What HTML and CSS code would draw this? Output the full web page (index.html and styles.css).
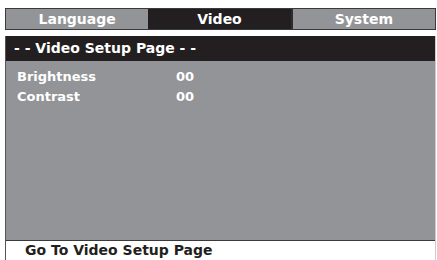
FILE: index.html
```html
<!DOCTYPE html>
<html lang="en">
<head>
    <meta charset="UTF-8">
    <title>Video Setup</title>
    <link rel="stylesheet" href="styles.css">
</head>
<body>

    <div class="tabs">
        <div class="tab">Language</div>
        <div class="tab active">Video</div>
        <div class="tab">System</div>
    </div>

    <div class="panel">
        <div class="panel-title">- - Video Setup Page - -</div>

        <div class="settings">
            <div class="row">
                <span class="label">Brightness</span>
                <span class="value">00</span>
            </div>
            <div class="row">
                <span class="label">Contrast</span>
                <span class="value">00</span>
            </div>
        </div>

        <div class="status">Go To Video Setup Page</div>
    </div>

</body>
</html>
```

FILE: styles.css
```css
body {
    font-family: "DejaVu Sans", sans-serif;
    font-weight: bold;
    margin: 0;
    padding: 8px 1px 0 5px;
    background-color: #fff;
    height: 260px;
    box-sizing: border-box;
    display: flex;
    flex-direction: column;
    overflow: hidden;
}

.tabs {
    display: flex;
    height: 22px;
    border: 1px solid #3a3a3c;
    box-sizing: border-box;
}

.tab {
    flex: 1;
    background-color: #939497;
    color: #fff;
    font-size: 14px;
    text-align: center;
    line-height: 20px;
}

.tab.active {
    background-color: #231f20;
    border-right: 2px solid #2e2e30;
}

.panel {
    flex: 1;
    margin-top: 6px;
    display: flex;
    flex-direction: column;
    border-left: 1px solid #555;
    border-right: 1px solid #ccc;
}

.panel-title {
    background-color: #231f20;
    color: #fff;
    height: 25px;
    line-height: 25px;
    font-size: 14px;
    padding-left: 8px;
}

.settings {
    flex: 1;
    background-color: #939497;
    color: #fff;
    font-size: 13px;
    padding: 6px 0 0 11px;
    border-bottom: 1px solid #3a3a3c;
}

.row {
    display: flex;
    height: 20px;
    line-height: 20px;
}

.label {
    width: 159px;
}

.status {
    height: 19px;
    line-height: 19px;
    font-size: 14px;
    color: #231f20;
    padding-left: 19px;
}
```
